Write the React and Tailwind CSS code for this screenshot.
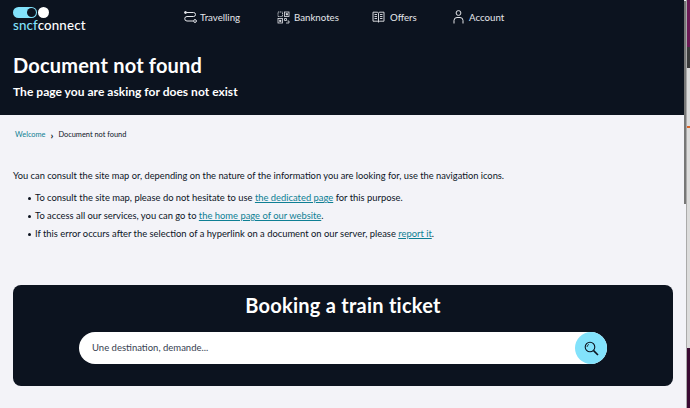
import React from "react";

function Logo() {
  return (
    <div className="flex flex-col w-[74px] mt-[7px]">
      <div className="flex items-center h-[11px]">
        <div className="w-[24px] h-[11px] rounded-full bg-[#82e2fb] relative shrink-0">
          <div className="absolute right-[1px] top-[1px] w-[9px] h-[9px] rounded-full bg-[#0c131f]"></div>
        </div>
        <div className="w-[11px] h-[11px] rounded-full bg-white ml-[1px]"></div>
      </div>
      <div className="text-[13.3px] leading-[14px] font-medium tracking-[0.15px] whitespace-nowrap">
        <span className="text-[#82e2fb]">sncf</span><span className="text-white">connect</span>
      </div>
    </div>
  );
}

const TravelIcon = () => (
  <svg width="13" height="13" viewBox="0 0 13 13" fill="none" stroke="#e5e7eb" strokeWidth="1">
    <circle cx="1.5" cy="1.5" r="1" fill="#e5e7eb" />
    <path d="M2.5 1.5H9.5a1.8 1.8 0 0 1 0 4H3a1.8 1.8 0 0 0 0 4.5H9" />
    <circle cx="11" cy="10" r="1.4" />
  </svg>
);
const NotesIcon = () => (
  <svg width="13" height="13" viewBox="0 0 13 13" fill="none" stroke="#e5e7eb" strokeWidth="0.8">
    <rect x="1" y="1" width="4.5" height="4.5" strokeDasharray="1.2 0.6" />
    <rect x="7.5" y="1" width="4.5" height="4.5" />
    <rect x="1" y="7.5" width="4.5" height="4.5" />
    <rect x="9.2" y="2.7" width="1.2" height="1.2" fill="#e5e7eb" />
    <rect x="2.7" y="9.2" width="1.2" height="1.2" fill="#e5e7eb" />
    <path d="M7.5 7.5h2v2h-2zM10.5 10h1.5v2h-3" />
  </svg>
);
const BookIcon = () => (
  <svg width="13" height="12" viewBox="0 0 13 12" fill="none" stroke="#e5e7eb" strokeWidth="0.9">
    <path d="M1 1.2h4c.8 0 1.5.5 1.5 1.2 0-.7.7-1.2 1.5-1.2h4v9H8c-.8 0-1.5.4-1.5 1 0-.6-.7-1-1.5-1H1z" />
    <path d="M6.5 2.4v8.6M2.5 3.5h2.5M2.5 5.5h2.5M2.5 7.5h2.5M8 3.5h2.5M8 5.5h2.5M8 7.5h2.5" />
  </svg>
);
const UserIcon = () => (
  <svg width="11" height="14" viewBox="0 0 11 14" fill="none" stroke="#e5e7eb" strokeWidth="1">
    <circle cx="5.5" cy="3" r="2.4" />
    <path d="M1 13.5V10.5a3 3 0 0 1 3-3h3a3 3 0 0 1 3 3v3" />
  </svg>
);

function NavItem({ icon, label, className }) {
  return (
    <div className={"flex items-center text-[9.7px] text-[#e5e7eb] " + className}>
      {icon}
      <span>{label}</span>
    </div>
  );
}

const A = ({ children }) => <a href="#" className="text-[#0e7f94] underline">{children}</a>;

function Item({ children }) {
  return (
    <li className="flex items-center">
      <span className="w-[3px] h-[3px] rounded-full bg-[#0c131f] mr-[4px] shrink-0"></span>
      <span>{children}</span>
    </li>
  );
}

export default function App() {
  return (
    <div className="w-[690px] h-[408px] overflow-hidden flex bg-[#f3f3f8] font-['Lato','Noto_Sans',sans-serif]">
      <div className="w-[686px] shrink-0 relative flex flex-col">
        <header className="bg-[#0c131f] h-[115px] w-[684px] shrink-0 px-[13px]">
          <div className="flex h-[42px]">
            <Logo />
            <div className="flex items-center ml-[97px] h-[35px]">
              <NavItem icon={<TravelIcon />} label="Travelling" className="w-[93px] gap-[3px]" />
              <NavItem icon={<NotesIcon />} label="Banknotes" className="w-[95px] gap-[4px]" />
              <NavItem icon={<BookIcon />} label="Offers" className="w-[81px] gap-[5px]" />
              <NavItem icon={<UserIcon />} label="Account" className="gap-[5px]" />
            </div>
          </div>
          <h1 className="text-[20px] leading-[26px] font-bold text-white mt-[10px] tracking-[0.2px]">Document not found</h1>
          <p className="text-[12px] leading-[18px] font-bold text-white mt-[5px] tracking-[0.03px]">The page you are asking for does not exist</p>
        </header>
        <main className="flex-1 px-[13px]">
          <nav className="flex items-center text-[7.4px] leading-[10px] pl-[2px] mt-[15px] text-[#0c131f]">
            <span className="text-[#0e7f94]">Welcome</span>
            <span className="mx-[5px] text-[10px] font-bold">›</span>
            <span>Document not found</span>
          </nav>
          <p className="text-[9.3px] leading-[14px] text-[#0c131f] mt-[29px]">
            You can consult the site map or, depending on the nature of the information you are looking for, use the navigation icons.
          </p>
          <ul className="pl-[15px] mt-[8px] text-[9.4px] leading-[14px] text-[#0c131f] flex flex-col gap-[4px]">
            <Item>To consult the site map, please do not hesitate to use <A>the dedicated page</A> for this purpose.</Item>
            <Item>To access all our services, you can go to <A>the home page of our website</A>.</Item>
            <Item>If this error occurs after the selection of a hyperlink on a document on our server, please <A>report it</A>.</Item>
          </ul>
          <section className="mt-[44px] h-[101px] w-[660px] rounded-[8px] bg-[#0c131f] flex flex-col items-center pt-[7px]">
            <h2 className="text-[20px] leading-[26px] font-bold text-white tracking-[0.25px]">Booking a train ticket</h2>
            <div className="mt-[14px] w-[528px] h-[32px] rounded-full bg-white flex items-center justify-between pl-[13px]">
              <span className="text-[9.5px] text-[#374151]">Une destination, demande...</span>
              <div className="w-[32px] h-[32px] rounded-full bg-[#82e2fb] flex items-center justify-center">
                <svg width="15" height="15" viewBox="0 0 15 15" fill="none" stroke="#0c131f" strokeWidth="1.1">
                  <circle cx="6" cy="6" r="4.8" />
                  <path d="M9.6 9.6L14 14" strokeWidth="1.6" />
                  <path d="M3 6a3 3 0 0 1 2-2.6" strokeWidth="0.8" />
                </svg>
              </div>
            </div>
          </section>
        </main>
        <div className="absolute right-0 top-[1px] w-[2px] h-[203px] bg-[#777777]"></div>
      </div>
      <div className="flex-1 flex flex-col bg-[#dcdcdc] border-l border-[#aaaaaa]">
        <div className="h-[47px] bg-[#6b1a54]"></div>
        <div className="h-[21px] bg-[#3a3a3a]"></div>
        <div className="h-[58px]"></div>
        <div className="h-[2px] bg-[#d9642a]"></div>
        <div className="flex-1"></div>
        <div className="h-[60px] bg-[#3a0a33]"></div>
      </div>
    </div>
  );
}
